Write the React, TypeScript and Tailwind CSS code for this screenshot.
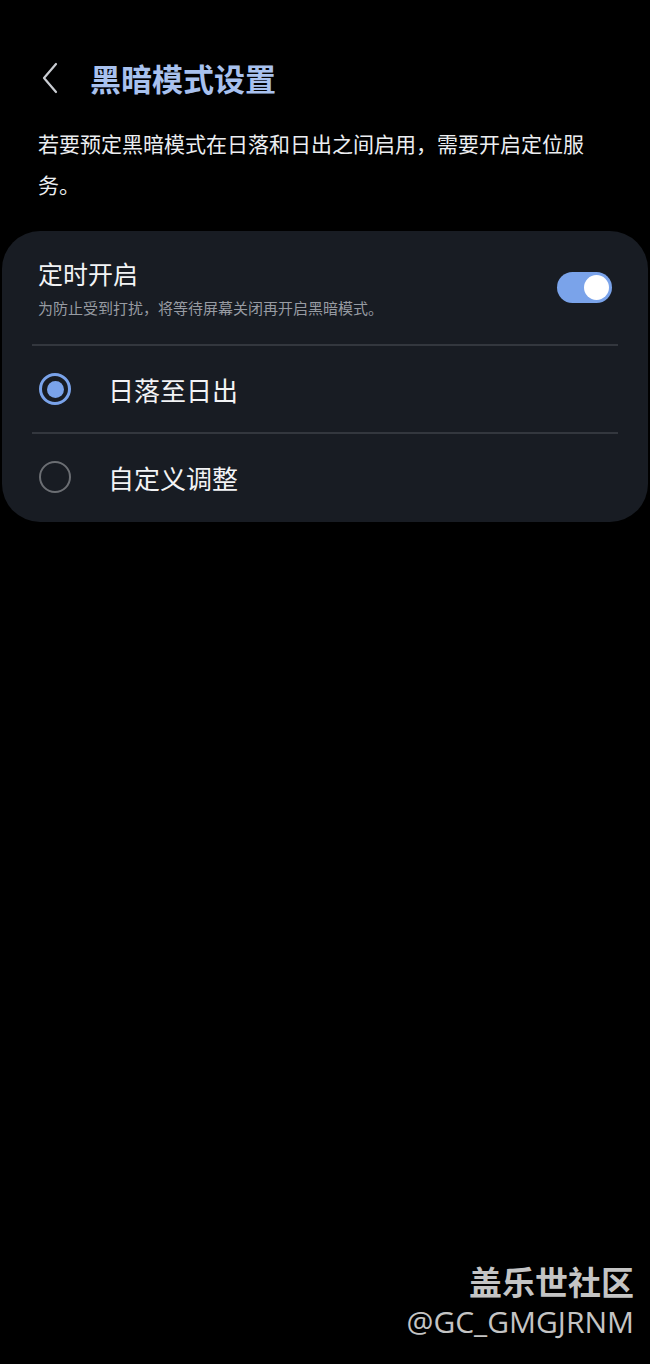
const cjk = { fontFamily: '"Noto Sans CJK SC", "Noto Sans", sans-serif' };

function Toggle({ on }: { on: boolean }) {
  return (
    <div className={`flex h-[31px] w-[55px] items-center rounded-full px-[3px] ${on ? "justify-end bg-[#7aa3ea]" : "justify-start bg-[#3a3e45]"}`}>
      <div className="h-[25px] w-[25px] rounded-full bg-white" />
    </div>
  );
}

function Radio({ checked }: { checked: boolean }) {
  return checked ? (
    <div className="flex h-[32px] w-[32px] items-center justify-center rounded-full border-[3px] border-[#7aa3ea]">
      <div className="h-[17px] w-[17px] rounded-full bg-[#7aa3ea]" />
    </div>
  ) : (
    <div className="h-[32px] w-[32px] rounded-full border-[2px] border-[#6b6e73]" />
  );
}

function OptionRow({ label, checked }: { label: string; checked: boolean }) {
  return (
    <div className="flex h-[86px] items-center pl-[37px]">
      <Radio checked={checked} />
      <span className="ml-[37px] text-[26px] text-[#f2f3f5]">{label}</span>
    </div>
  );
}

export default function App() {
  const options = [
    { label: "日落至日出", checked: true },
    { label: "自定义调整", checked: false },
  ];

  return (
    <div className="relative h-[1364px] w-[650px] overflow-hidden bg-black" style={cjk}>
      <header className="flex items-center pt-[58px]">
        <svg className="ml-[40px] h-[36px] w-[20px]" viewBox="0 0 20 36" fill="none" stroke="#c9ccd2" strokeWidth="2.2" strokeLinecap="round" strokeLinejoin="round">
          <path d="M16 4 L4 18 L16 32" />
        </svg>
        <h1 className="ml-[30px] text-[31px] font-bold leading-[40px] text-[#a8c1ee]">黑暗模式设置</h1>
      </header>

      <p className="mt-[25px] px-[38px] text-[21px] leading-[41px] text-[#eceef1]">
        若要预定黑暗模式在日落和日出之间启用，需要开启定位服务。
      </p>

      <section className="mx-[2px] mt-[26px] rounded-[38px] bg-[#181c23] pb-[2px]">
        <div className="flex items-center justify-between px-[36px] pb-[25px] pt-[25px]">
          <div>
            <div className="text-[25px] leading-[34px] text-[#f2f3f5]">定时开启</div>
            <div className="mt-[7px] text-[15px] leading-[22px] text-[#979ba2]">为防止受到打扰，将等待屏幕关闭再开启黑暗模式。</div>
          </div>
          <Toggle on />
        </div>
        {options.map((o) => (
          <div key={o.label}>
            <div className="mx-[30px] h-[2px] bg-[#33373e]" />
            <OptionRow label={o.label} checked={o.checked} />
          </div>
        ))}
      </section>

      <div className="absolute bottom-[22px] right-[16px] text-right text-[#c4c4c4]">
        <div className="text-[33px] font-bold leading-[42px]">盖乐世社区</div>
        <div className="text-[30px] leading-[40px]" style={{ fontFamily: '"Open Sans", "Noto Sans", sans-serif' }}>@GC_GMGJRNM</div>
      </div>
    </div>
  );
}
